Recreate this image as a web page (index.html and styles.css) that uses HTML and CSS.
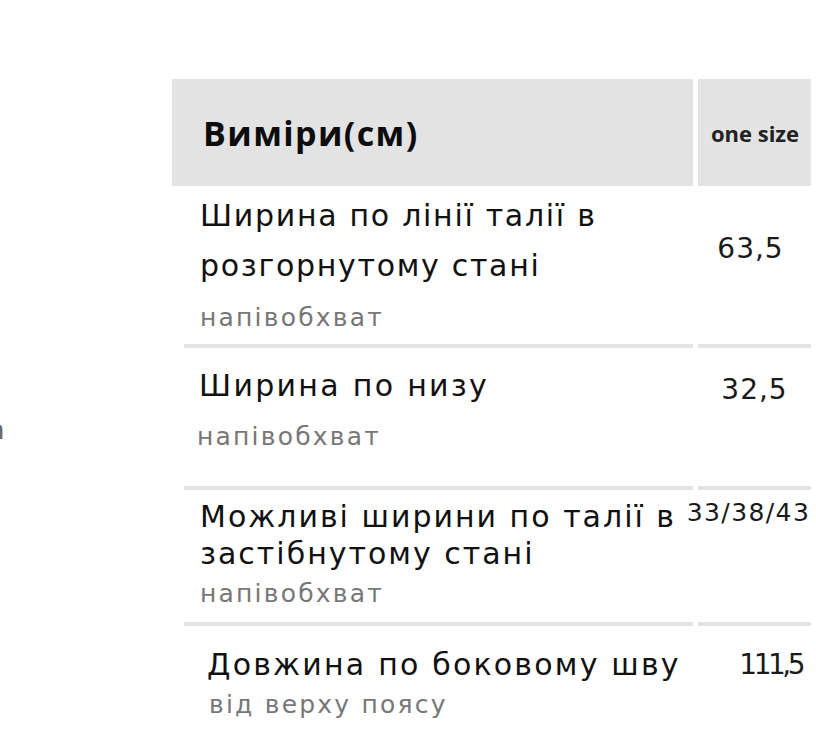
FILE: index.html
```html
<!DOCTYPE html>
<html lang="uk">
<head>
<meta charset="utf-8">
<link rel="stylesheet" href="styles.css">
</head>
<body>
<div class="page">
  <div class="side"><span class="stray">n</span></div>
  <div class="table">
    <div class="head">
      <div class="hcell hmain">Виміри(см)</div>
      <div class="hcell hsize">one size</div>
    </div>

    <div class="row r1">
      <div class="label">
        <div class="title">Ширина по лінії талії в<br>розгорнутому стані</div>
        <div class="sub">напівобхват</div>
      </div>
      <div class="val">63,5</div>
    </div>
    <div class="sep"><span class="seg-l"></span><span class="seg-r"></span></div>

    <div class="row r2">
      <div class="label">
        <div class="title">Ширина по низу</div>
        <div class="sub">напівобхват</div>
      </div>
      <div class="val">32,5</div>
    </div>
    <div class="sep"><span class="seg-l"></span><span class="seg-r"></span></div>

    <div class="row r3">
      <div class="label">
        <div class="title">Можливі ширини по талії в<br>застібнутому стані</div>
        <div class="sub">напівобхват</div>
      </div>
      <div class="val">33/38/43</div>
    </div>
    <div class="sep"><span class="seg-l"></span><span class="seg-r"></span></div>

    <div class="row r4">
      <div class="label">
        <div class="title">Довжина по боковому шву</div>
        <div class="sub">від верху поясу</div>
      </div>
      <div class="val">111,5</div>
    </div>
  </div>
</div>
</body>
</html>
```

FILE: styles.css
```css
html, body {
  margin: 0;
  padding: 0;
  background: #ffffff;
  overflow: hidden;
}
body {
  font-family: "DejaVu Sans", "Noto Sans", sans-serif;
  color: #111111;
}
.page {
  display: flex;
  width: 816px;
  height: 749px;
  overflow: hidden;
}
.side {
  width: 172px;
  flex: none;
  padding-top: 410px;
  box-sizing: border-box;
}
.stray {
  display: block;
  margin-left: -12px;
  font-size: 26px;
  line-height: 40px;
  color: #666666;
}
.table {
  padding-top: 79px;
  width: 639px;
  flex: none;
}
.head {
  display: grid;
  grid-template-columns: 521px 113px;
  column-gap: 5px;
  height: 107px;
}
.hcell {
  background: #e3e3e3;
  display: flex;
  align-items: center;
  font-family: "Open Sans", sans-serif;
  font-weight: 700;
  color: #0c0c0c;
}
.hmain {
  padding-left: 31px;
  font-size: 34px;
  letter-spacing: 1.4px;
}
.hsize {
  justify-content: center;
  padding-left: 1px;
  font-size: 22px;
  letter-spacing: 0;
  color: #222222;
}
.row {
  display: grid;
  grid-template-columns: 521px 113px;
  column-gap: 5px;
}
.label {
  padding-left: 28px;
}
.title {
  font-size: 30px;
  letter-spacing: 2px;
  color: #111111;
  white-space: nowrap;
}
.sub {
  font-size: 25px;
  line-height: 30px;
  letter-spacing: 2.2px;
  color: #777777;
}
.val {
  font-size: 28px;
  line-height: 40px;
  text-align: center;
  color: #1a1a1a;
  white-space: nowrap;
}
.sep {
  display: grid;
  grid-template-columns: 509px 113px;
  column-gap: 5px;
  margin-left: 12px;
  height: 4px;
}
.seg-l, .seg-r {
  background: #e3e3e3;
}

.r1 { height: 158px; }
.r1 .label { padding-top: 5px; }
.r1 .title { line-height: 50px; letter-spacing: 1.7px; }
.r1 .sub { margin-top: 12px; }
.r1 .val { padding-top: 43px; padding-right: 8px; letter-spacing: 1px; }

.r2 { height: 138px; }
.r2 .label { padding-top: 18px; padding-left: 27px; }
.r2 .title { line-height: 40px; letter-spacing: 2.3px; }
.r2 .sub { margin-top: 16px; margin-left: -2px; }
.r2 .val { padding-top: 22px; letter-spacing: 1px; }

.r3 { height: 132px; }
.r3 .label { padding-top: 8px; }
.r3 .title { line-height: 37px; }
.r3 .sub { margin-top: 7px; }
.r3 .val { padding-top: 3px; margin-left: -12px; font-size: 25px; letter-spacing: 1.4px; }

.r4 { height: 130px; }
.r4 .label { padding-top: 19px; padding-left: 35px; }
.r4 .title { line-height: 40px; letter-spacing: 2.2px; }
.r4 .sub { margin-top: 5px; margin-left: 2px; }
.r4 .val { padding-top: 19px; text-align: right; padding-right: 9px; letter-spacing: -3.5px; }
```
